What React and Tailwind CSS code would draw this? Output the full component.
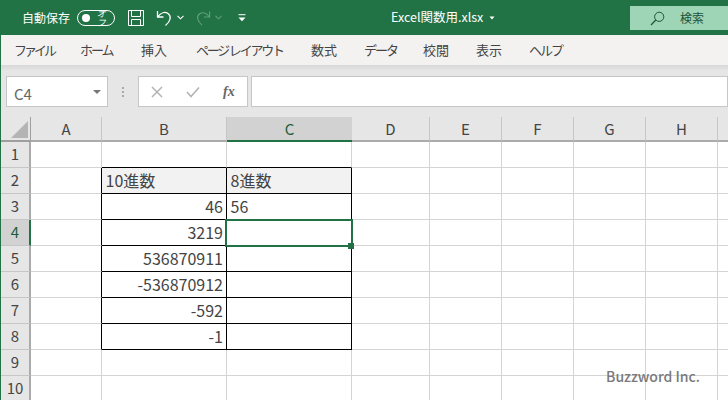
const font = "font-['Noto_Sans_CJK_JP','Liberation_Sans',sans-serif]";

const tabs = [
  ["ファイル", "w-[66px] tracking-[-3px]"],
  ["ホーム", "w-[61px] tracking-[-2px]"],
  ["挿入", "w-[55px]"],
  ["ページ レイアウト", "w-[115px] tracking-[-2.2px]"],
  ["数式", "w-[53px]"],
  ["データ", "w-[59px] tracking-[-2px]"],
  ["校閲", "w-[53px]"],
  ["表示", "w-[53px]"],
  ["ヘルプ", "w-[60px] tracking-[-2px]"],
];

// the last column only shows its left edge, its label is off the page
const columns = ["A", "B", "C", "D", "E", "F", "G", "H", ""];
const rows = [1, 2, 3, 4, 5, 6, 7, 8, 9, 10];

const cells = {
  B2: "10進数",
  C2: "8進数",
  B3: "46",
  C3: "56",
  B4: "3219",
  B5: "536870911",
  B6: "-536870912",
  B7: "-592",
  B8: "-1",
};

function Chevron({ className }) {
  return (
    <svg width="7" height="5" viewBox="0 0 7 5" className={className}>
      <path d="M0.5 0.8 L3.5 3.8 L6.5 0.8" fill="none" stroke="currentColor" strokeWidth="1.1" />
    </svg>
  );
}

function TitleBar() {
  return (
    <div className="relative flex h-[35px] items-center bg-[#217346] text-white">
      <span className="ml-[22px] text-[12px] leading-none">自動保存</span>
      <div className="ml-[7px] flex h-[16px] w-[38px] items-center rounded-full border border-white pl-[4px]">
        <span className="h-[8px] w-[8px] rounded-full bg-white" />
        <span className="ml-[7px] text-[9px] italic leading-none">オフ</span>
      </div>
      <svg width="18" height="18" viewBox="0 0 18 18" className="ml-[12px]">
        <path d="M1.5 1.5 H16.5 V16.5 H1.5 Z M4.5 1.5 V7.5 H13.5 V1.5 M4.5 16.5 V10.5 H13.5 V16.5" fill="none" stroke="#fff" strokeWidth="1" />
      </svg>
      <svg width="18" height="18" viewBox="0 0 18 18" className="ml-[11px]">
        <path d="M1.5 2 V8 H7.5 M2 7.5 C5 3.5 9 2.5 12 4.5 C15.5 7 15 12 9.5 16.5" fill="none" stroke="#fff" strokeWidth="1.3" />
      </svg>
      <Chevron className="ml-[3px] text-white" />
      <svg width="17" height="18" viewBox="0 0 18 18" className="ml-[10px]">
        <path d="M16.5 2 V8 H10.5 M16 7.5 C13 3.5 9 2.5 6 4.5 C2.5 7 3 12 8.5 16.5" fill="none" stroke="#5f9e7d" strokeWidth="1.2" />
      </svg>
      <Chevron className="ml-[4px] text-[#5f9e7d]" />
      <svg width="8" height="8" viewBox="0 0 8 8" className="ml-[16px]">
        <path d="M0.5 0.7 H7.5" stroke="#fff" strokeWidth="1" />
        <path d="M0.5 3.5 H7.5 L4 7.3 Z" fill="#fff" />
      </svg>
      <span className="ml-[145px] text-[12.5px] leading-none">Excel関数用.xlsx</span>
      <svg width="6" height="4" viewBox="0 0 6 4" className="ml-[6px]">
        <path d="M0.5 0.5 H5.5 L3 3.5 Z" fill="#fff" />
      </svg>
      <div className="ml-auto mt-[6px] flex h-[24px] w-[98px] self-start items-center bg-[#9fd5b7] pl-[20px] text-[#20533a]">
        <svg width="15" height="15" viewBox="0 0 15 15">
          <circle cx="9.2" cy="5.8" r="4.6" fill="none" stroke="currentColor" strokeWidth="1" />
          <path d="M5.8 9 L1 14" stroke="currentColor" strokeWidth="1.2" />
        </svg>
        <span className="ml-[15px] text-[12px] leading-none">検索</span>
      </div>
    </div>
  );
}

function TabBar() {
  return (
    <div className="flex h-[30px] items-center bg-[#f3f2f1] pb-[2px] pl-[13px] text-[13px] text-[#444]">
      {tabs.map(([label, width]) => (
        <span key={label} className={`${width} whitespace-nowrap leading-none`}>
          {label}
        </span>
      ))}
    </div>
  );
}

function FormulaBar() {
  return (
    <div className="h-[52px] bg-gradient-to-b from-[#d8d8d8] from-0% via-[#e6e6e6] via-[12%] to-[#e6e6e6] pl-[5px] pt-[11px]">
      <div className="flex h-[31px] items-stretch">
        <div className="flex w-[102px] items-center border border-[#c6c6c6] bg-white pl-[7px] pr-[6px] text-[15px] text-[#666]">
          <span className="pt-[4px] leading-none">C4</span>
          <span className="ml-auto h-0 w-0 border-x-[4px] border-t-[4px] border-x-transparent border-t-[#777]" />
        </div>
        <div className="flex w-[30px] flex-col items-center justify-center gap-[2px]">
          <span className="h-[2px] w-[2px] bg-[#aaa]" />
          <span className="h-[2px] w-[2px] bg-[#aaa]" />
          <span className="h-[2px] w-[2px] bg-[#aaa]" />
        </div>
        <div className="flex w-[110px] items-center border border-[#c6c6c6] bg-white">
          <svg width="12" height="12" viewBox="0 0 12 12" className="ml-[12px]">
            <path d="M1 1 L11 11 M11 1 L1 11" stroke="#b4b4b4" strokeWidth="1.5" />
          </svg>
          <svg width="14" height="12" viewBox="0 0 14 12" className="ml-[23px]">
            <path d="M1 6 L5 10.5 L13 1.5" fill="none" stroke="#b4b4b4" strokeWidth="1.6" />
          </svg>
          <span className="ml-[23px] font-['Liberation_Serif',serif] text-[14px] font-bold italic leading-none text-[#666]">
            fx
          </span>
        </div>
        <div className="ml-[3px] flex-1 border border-[#c6c6c6] bg-white" />
      </div>
    </div>
  );
}

function Cell({ col, row }) {
  const id = col + row;
  const value = cells[id];
  const inTable = (col === "B" || col === "C") && row >= 2 && row <= 8;
  const isHeader = inTable && row === 2;
  const isNumber = value && col === "B" && row > 2;
  const selected = id === "C4";

  return (
    <div
      className={`relative flex items-center whitespace-nowrap border-b border-r pb-[2px] text-[16px] leading-none text-[#444] ${
        inTable ? "border-black" : "border-[#d4d4d4]"
      } ${col === "A" && row >= 2 && row <= 8 ? "border-r-black" : ""} ${
        row === 1 && (col === "B" || col === "C") ? "border-b-black" : ""
      } ${isHeader ? "bg-[#f2f2f2]" : "bg-white"} ${isNumber ? "justify-end pr-[3px]" : "pl-[3.5px]"} ${
        selected ? "z-10" : ""
      }`}
    >
      {value}
      {selected && (
        <>
          <span className="absolute bottom-[-2px] left-[-2px] right-[-2px] top-[-1px] border-2 border-[#217346]" />
          <span className="absolute bottom-[-4px] right-[-3px] h-[6px] w-[6px] bg-[#217346]" />
        </>
      )}
    </div>
  );
}

function Sheet() {
  return (
    <div className="relative grid h-[283px] grid-cols-[30px_71px_125px_125px_78px_72px_72px_72px_72px_72px] grid-rows-[25px_repeat(10,26px)] overflow-hidden bg-white">
      <div className="flex items-end justify-end border-b-2 border-r border-[#9f9f9f] bg-[#e6e6e6] p-[2px]">
        <span className="h-0 w-0 border-b-[17px] border-l-[17px] border-b-[#b4b4b4] border-l-transparent" />
      </div>
      {columns.map((c, i) => (
        <div
          key={i}
          className={`flex items-center justify-center border-b-2 text-[15px] leading-none ${
            c === "C"
              ? "border-b-[#217346] bg-[#d2d2d2] text-[#1c5e3a]"
              : "border-b-[#ababab] border-r border-r-[#c6c6c6] bg-[#e6e6e6] text-[#444]"
          }`}
        >
          {c}
        </div>
      ))}
      {rows.map((r) => (
        <div key={r} className="contents">
          <div
            className={`flex items-center justify-center border-b border-r-2 border-b-[#c6c6c6] pb-[2px] text-[15px] leading-none ${
              r === 4
                ? "border-r-[#217346] bg-[#d2d2d2] text-[#1c5e3a]"
                : "border-r-[#ababab] bg-[#e6e6e6] text-[#444]"
            }`}
          >
            {r}
          </div>
          {columns.map((c, i) => (
            <Cell key={i} col={c} row={r} />
          ))}
        </div>
      ))}
      <span className="absolute bottom-[17px] right-[28px] z-10 text-[14px] font-medium leading-none text-[#7a7a7a]">
        Buzzword Inc.
      </span>
    </div>
  );
}

export default function App() {
  return (
    <div className={`h-[400px] w-[728px] overflow-hidden ${font}`}>
      <TitleBar />
      <div className="border-l border-[#217346]">
        <TabBar />
        <FormulaBar />
        <Sheet />
      </div>
    </div>
  );
}
